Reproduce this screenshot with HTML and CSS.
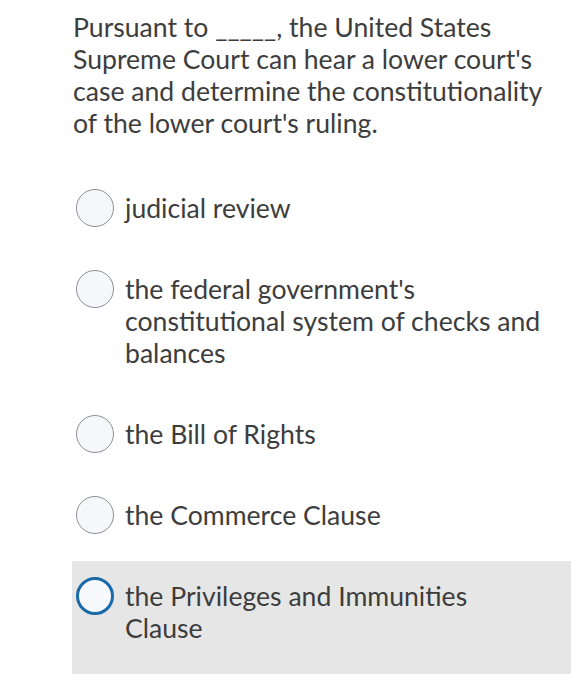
FILE: index.html
```html
<!DOCTYPE html>
<html>
<head>
<meta charset="utf-8">
<link rel="stylesheet" href="styles.css">
</head>
<body>
<div class="quiz">
  <p class="question">Pursuant to _____, the United States Supreme Court can hear a lower court's case and determine the constitutionality of the lower court's ruling.</p>
  <ul class="answers">
    <li class="answer"><span class="radio"></span><span class="label">judicial review</span></li>
    <li class="answer"><span class="radio"></span><span class="label">the federal government's constitutional system of checks and balances</span></li>
    <li class="answer"><span class="radio"></span><span class="label">the Bill of Rights</span></li>
    <li class="answer"><span class="radio"></span><span class="label">the Commerce Clause</span></li>
    <li class="answer answer-hover"><span class="radio radio-focus"></span><span class="label">the Privileges and Immunities Clause</span></li>
  </ul>
</div>
</body>
</html>
```

FILE: styles.css
```css
html, body {
  margin: 0;
  padding: 0;
  background: #ffffff;
}

.quiz {
  padding: 11px 0 0 73px;
  font-family: Lato, "Open Sans", sans-serif;
  font-size: 26.6px;
  line-height: 32px;
  color: #3d3d3d;
}

.question {
  margin: 0 0 34px 0;
  width: 476px;
}

.answers {
  list-style: none;
  margin: 0;
  padding: 0;
}

.answer {
  display: flex;
  align-items: flex-start;
  gap: 11px;
  padding: 19px 0 30px 4px;
  margin-left: -1px;
}

.answer-hover {
  background: #e6e6e6;
}

.radio {
  flex: none;
  box-sizing: border-box;
  width: 38px;
  height: 38px;
  margin: -3px 0 -3px 0;
  border-radius: 50%;
  border: 1.5px solid #8e8e93;
  background: #f6f7fb;
}

.radio-focus {
  border: 3px solid #1b6aa8;
  background: #f7f9fc;
}

.label {
  width: 418px;
}
```
